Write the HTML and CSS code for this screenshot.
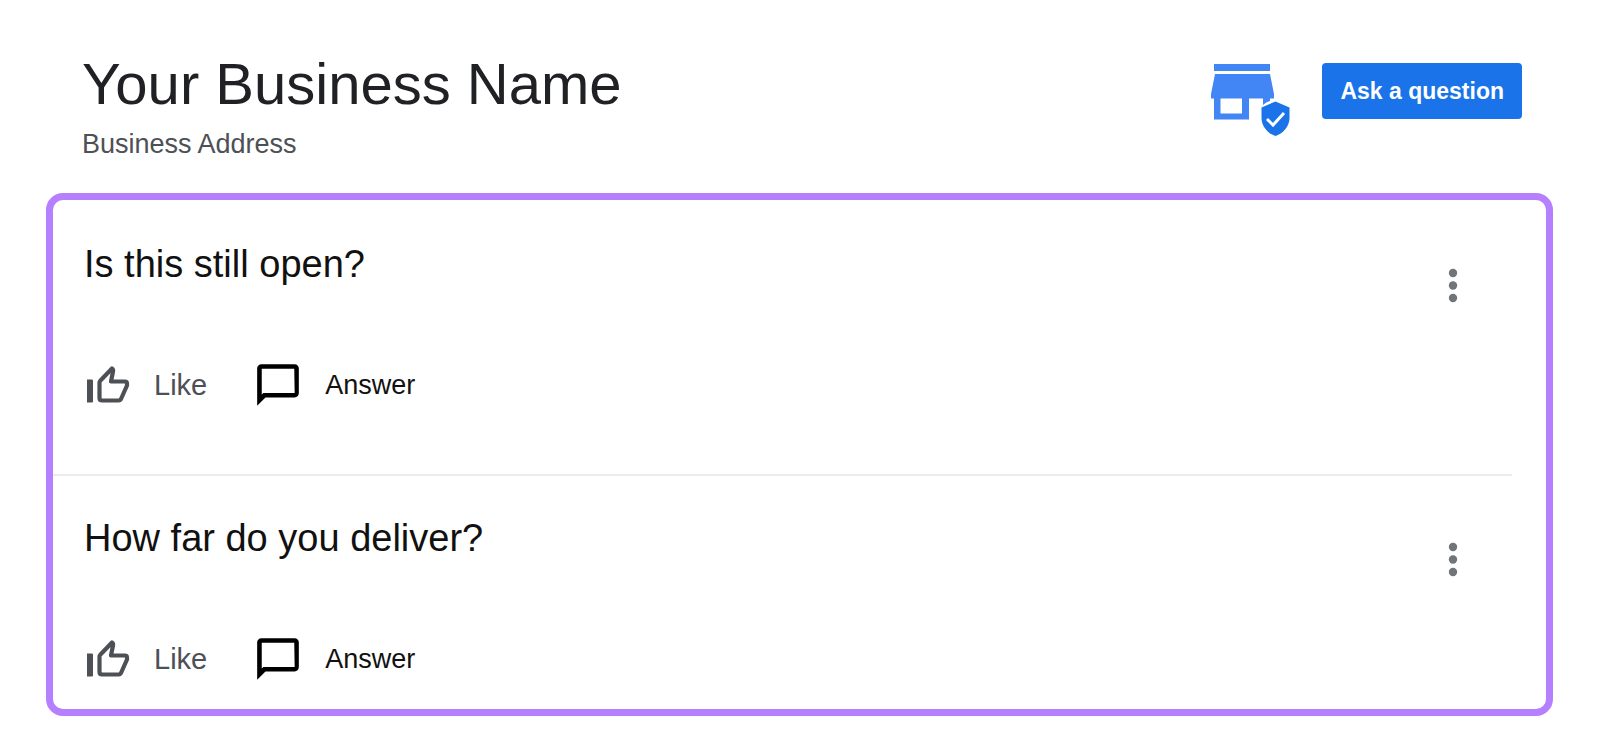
FILE: index.html
```html
<!DOCTYPE html>
<html lang="en">
<head>
	<meta charset="UTF-8">
	<title>Your Business Name</title>
	<link rel="stylesheet" href="styles.css">
</head>
<body>
	<header class="header">
		<div class="business">
			<h1 class="name">Your Business Name</h1>
			<p class="address">Business Address</p>
		</div>
		<div class="tools">
			<svg class="store" viewBox="0 0 80 74" role="img" aria-label="Verified business">
				<path fill="#4285f4" d="M3 1h56v7H3zM4 11h55l4 20v4.500h-4v2.500q-4 1-7 4v-6.500H38v21H3v-21H0V31zM9.500 35.500v15H31v-15z"/>
				<path fill="#1a73e8" d="M64.500 38.500l14 6v10.500c0 8-6 15.500-14 18-8-2.500-14-10-14-18V44.500z"/>
				<path fill="none" stroke="#fff" stroke-width="3" d="M56 56l6 6 11-12"/>
			</svg>
			<button class="ask" type="button">Ask a question</button>
		</div>
	</header>
	<ul class="questions">
		<li class="item">
			<div class="main">
				<h2 class="title">Is this still open?</h2>
				<div class="actions">
					<button class="like" type="button">
						<svg class="thumb" viewBox="0 0 44 40" aria-hidden="true">
							<path fill="#4d5156" d="M1 14.500h5q1 0 1 1v21q0 1-1 1H1z"/>
							<path fill="none" stroke="#4d5156" stroke-width="4.200" stroke-linejoin="round" d="M13.500 17.500q0-1 1-2L26 3.500q1.500 1 1 3L25 16.500h14q2 0 2 2v2l-6 13.500q-1 1.500-2 1.500H16q-2.500 0-2.500-2.500z"/>
						</svg>
						Like
					</button>
					<button class="answer" type="button">
						<svg class="bubble" viewBox="0 0 24 24" aria-hidden="true">
							<path d="M20 2H4c-1.100 0-2 .9-2 2v18l4-4h14c1.100 0 2-.9 2-2V4c0-1.100-.9-2-2-2zm0 13.800H5l-.8.8V4.200h15.600z"/>
						</svg>
						Answer
					</button>
				</div>
			</div>
			<button class="more" type="button" aria-label="More options">
				<svg viewBox="0 0 50 50" aria-hidden="true">
					<circle cx="25" cy="13" r="4.200"/><circle cx="25" cy="25.500" r="4.200"/><circle cx="25" cy="38" r="4.200"/>
				</svg>
			</button>
		</li>
		<li class="item">
			<div class="main">
				<h2 class="title">How far do you deliver?</h2>
				<div class="actions">
					<button class="like" type="button">
						<svg class="thumb" viewBox="0 0 44 40" aria-hidden="true">
							<path fill="#4d5156" d="M1 14.500h5q1 0 1 1v21q0 1-1 1H1z"/>
							<path fill="none" stroke="#4d5156" stroke-width="4.200" stroke-linejoin="round" d="M13.500 17.500q0-1 1-2L26 3.500q1.500 1 1 3L25 16.500h14q2 0 2 2v2l-6 13.500q-1 1.500-2 1.500H16q-2.500 0-2.500-2.500z"/>
						</svg>
						Like
					</button>
					<button class="answer" type="button">
						<svg class="bubble" viewBox="0 0 24 24" aria-hidden="true">
							<path d="M20 2H4c-1.100 0-2 .9-2 2v18l4-4h14c1.100 0 2-.9 2-2V4c0-1.100-.9-2-2-2zm0 13.800H5l-.8.8V4.200h15.600z"/>
						</svg>
						Answer
					</button>
				</div>
			</div>
			<button class="more" type="button" aria-label="More options">
				<svg viewBox="0 0 50 50" aria-hidden="true">
					<circle cx="25" cy="13" r="4.200"/><circle cx="25" cy="25.500" r="4.200"/><circle cx="25" cy="38" r="4.200"/>
				</svg>
			</button>
		</li>
	</ul>
</body>
</html>
```
FILE: styles.css
```css
*{
	box-sizing: border-box;
}
body{
	margin: 0;
	padding: 51px 47px 31px 46px;
	background: #fff;
	color: #202124;
	font-family: "Liberation Sans", Arial, sans-serif;
}
h1,h2,p,ul{
	margin: 0;
	padding: 0;
	font-weight: normal;
}
ul{
	list-style: none;
}
button{
	border: 0;
	padding: 0;
	background: none;
	font-family: inherit;
	cursor: pointer;
}
svg{
	display: block;
}
.header{
	display: flex;
	justify-content: space-between;
	align-items: flex-start;
	padding: 0 31px 0 36px;
	margin-bottom: 33px;
}
.name{
	font-size: 58px;
	line-height: 66px;
}
.address{
	margin-top: 11px;
	font-size: 27px;
	line-height: 32px;
	color: #4d5156;
}
.tools{
	display: flex;
	align-items: flex-start;
	gap: 31px;
	padding-top: 12px;
}
.store{
	width: 80px;
	height: 74px;
}
.ask{
	padding: 14px 18px;
	border-radius: 4px;
	background: #1a73e8;
	color: #fff;
	font-size: 23px;
	font-weight: bold;
	line-height: 28px;
}
.questions{
	padding: 2px 34px 25px 0;
	border: 7px solid #b57fff;
	border-radius: 17px;
}
.item{
	display: flex;
	justify-content: space-between;
	align-items: flex-start;
	padding: 40px 34px 0 31px;
}
.item + .item{
	border-top: 2px solid #ececec;
}
.item:first-child{
	padding-bottom: 64px;
}
.title{
	font-size: 38px;
	line-height: 44px;
	color: #111;
}
.actions{
	display: flex;
	gap: 46px;
	margin-top: 74px;
}
.actions button{
	display: flex;
	align-items: center;
	height: 50px;
}
.actions .like{
	gap: 24px;
	padding-left: 2px;
	font-size: 29px;
	color: #4d5156;
}
.actions .answer{
	gap: 22px;
	font-size: 27px;
	color: #111;
}
.thumb{
	width: 44px;
	height: 40px;
}
.bubble{
	width: 50px;
	height: 50px;
	fill: #000;
}
.more{
	width: 50px;
	height: 50px;
	margin-top: 18px;
}
.more svg{
	fill: #70757a;
}
```
